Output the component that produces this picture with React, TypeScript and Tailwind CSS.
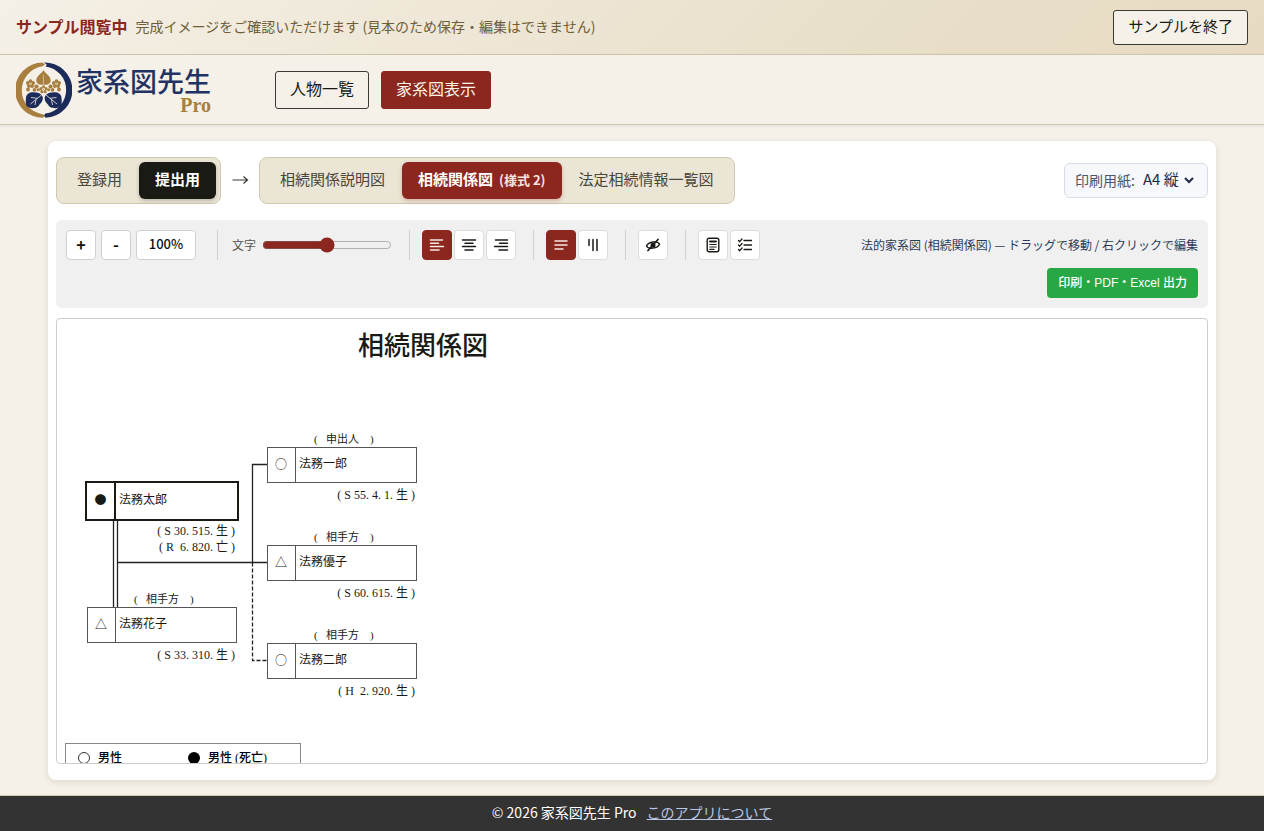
import React from "react";

const SANS = "font-['Noto_Sans_CJK_JP',sans-serif]";
const SERIF = "font-['Liberation_Serif','Noto_Sans_CJK_JP',serif]";

type Person = {
  name: string;
  mark: string;
  x: number;
  y: number;
  role?: string;
  dates: string[];
  main?: boolean;
};

const people: Person[] = [
  { name: "法務太郎", mark: "●", x: 30, y: 164, dates: ["( S 30. 515. 生 )", "( R  6. 820. 亡 )"], main: true },
  { name: "法務花子", mark: "△", x: 30, y: 288, role: "(   相手方    )", dates: ["( S 33. 310. 生 )"] },
  { name: "法務一郎", mark: "○", x: 210, y: 128, role: "(   申出人    )", dates: ["( S 55. 4. 1. 生 )"] },
  { name: "法務優子", mark: "△", x: 210, y: 226, role: "(   相手方    )", dates: ["( S 60. 615. 生 )"] },
  { name: "法務二郎", mark: "○", x: 210, y: 324, role: "(   相手方    )", dates: ["( H  2. 920. 生 )"] },
];

function PersonNode({ person }: { person: Person }) {
  return (
    <div className="absolute w-[150px]" style={{ left: person.x, top: person.y }}>
      {person.role && (
        <div className="absolute bottom-full left-[47px] h-4 text-[11px] leading-4 whitespace-pre">{person.role}</div>
      )}
      <div
        className={
          person.main
            ? "flex h-9 items-stretch bg-white outline-2 outline-[#1a1a14]"
            : "flex h-9 items-stretch bg-white outline-1 -outline-offset-1 outline-[#555]"
        }
      >
        <span
          className={
            person.main
              ? "flex w-[29px] items-center justify-center border-r-2 border-[#1a1a14] pb-0.5 font-['Noto_Sans_CJK_JP',sans-serif] text-xs"
              : "flex w-[29px] items-center justify-center border-r border-[#555] pb-0.5 font-['Noto_Sans_CJK_JP',sans-serif] text-xs"
          }
        >
          {person.mark}
        </span>
        <span className="flex items-center pb-0.5 pl-[3px] text-xs">{person.name}</span>
      </div>
      <div className="pt-1 pr-0.5 text-right">
        {person.dates.map((d) => (
          <div key={d} className="text-xs leading-4 whitespace-pre">
            {d}
          </div>
        ))}
      </div>
    </div>
  );
}

const petals = [
  [0, -2.7],
  [2.6, -0.8],
  [1.6, 2.2],
  [-1.6, 2.2],
  [-2.6, -0.8],
];

function Blossom({ x, y, r = 1.9 }: { x: number; y: number; r?: number }) {
  return (
    <g transform={`translate(${x} ${y})`}>
      {petals.map(([cx, cy]) => (
        <circle key={`${cx} ${cy}`} cx={cx} cy={cy} r={r} fill="#a87f3e" />
      ))}
      <circle r="1.100" fill="#f5f0e8" />
      <circle r=".6" fill="#a87f3e" />
    </g>
  );
}

function Emblem() {
  return (
    <svg viewBox="0 0 56 56" className="size-14 shrink-0" aria-hidden="true">
      <path d="M26.500 .6A27.500 27.500 0 0 0 27 55.800L29 53.500L26.500 52.200A24.200 24.200 0 0 1 26.500 4.300L29 2.600Z" fill="#a87f3e" />
      <path d="M28 .5L30.800 2.700L29.500 4.400A23.800 23.800 0 0 1 29.300 51.600L28 53.500L29.600 55.700A27.600 27.600 0 0 0 28 .5Z" fill="#1d2b5b" />
      <path d="M27.500 8C29 11.500 34.700 13.500 34.700 18.500C34.700 21.700 31.500 23.500 27.500 22.500C23.500 23.500 20.300 21.700 20.300 18.500C20.300 13.500 26 11.500 27.500 8Z" fill="#a87f3e" />
      <path d="M27.500 13V22" stroke="#f5f0e8" strokeWidth=".5" />
      <Blossom x={14.5} y={21.8} />
      <Blossom x={40.5} y={21.8} />
      <Blossom x={27.5} y={27.500} r={1.6} />
      <g fill="#a87f3e">
        <circle cx="12" cy="27.500" r="1.900" />
        <circle cx="43" cy="27.500" r="1.900" />
        <circle cx="20.500" cy="24.500" r="2.100" />
        <circle cx="34.500" cy="24.500" r="2.100" />
        <circle cx="18.500" cy="27.800" r="1.900" />
        <circle cx="36.500" cy="27.800" r="1.900" />
        <circle cx="22.300" cy="27.800" r="1.500" />
        <circle cx="32.700" cy="27.800" r="1.500" />
      </g>
      <path d="M10 36C10 31.500 15 29.500 19 30.500C22.500 30 26 32.500 26.700 35C27.200 39 25 41 23.500 42.500C22.500 46 16 47 13 45.500C9.500 45 9.500 40 10 36Z" fill="#1d2b5b" />
      <path d="M45.500 36C45.500 31.500 40.500 29.500 36.500 30.500C33 30 29.500 32.500 28.800 35C28.300 39 30.500 41 32 42.500C33 46 39.500 47 42.500 45.500C46 45 46 40 45.500 36Z" fill="#1d2b5b" />
      <path d="M25.500 33L14.500 42M21.500 36.300L15 35.500M20 37.500L19 43M30 33L41 42M34 36.300L40.500 35.500M35.500 37.500L36.500 43" stroke="#f5f0e8" strokeWidth=".8" fill="none" />
    </svg>
  );
}

function LineIcon({ d, width = 1.5 }: { d: string; width?: number }) {
  return (
    <svg
      viewBox="0 0 16 16"
      className="size-4"
      fill="none"
      stroke="currentColor"
      strokeWidth={width}
      strokeLinecap="round"
      strokeLinejoin="round"
      aria-hidden="true"
    >
      <path d={d} />
    </svg>
  );
}

function ToolButton({ label, active, children }: { label: string; active?: boolean; children: React.ReactNode }) {
  return (
    <button
      type="button"
      aria-label={label}
      aria-pressed={active}
      className={
        active
          ? "flex size-[30px] items-center justify-center rounded border border-[#8b271e] bg-[#8b271e] text-[#f5e8e4]"
          : "flex size-[30px] items-center justify-center rounded border border-[#dcdcdc] bg-white text-[#1a1a14]"
      }
    >
      {children}
    </button>
  );
}

function Divider() {
  return <span className="mr-3 ml-[17px] h-[30px] w-px bg-[#d0d0d0]" />;
}

const zoomButton =
  "h-[30px] rounded border border-[#d0d0d0] bg-white text-[#111] flex items-center justify-center pb-0.5";
const tab = "h-[37px] rounded-md px-4 pb-0.5 text-[15px] text-[#4a4638]";

export default function App() {
  return (
    <div className={`${SANS} flex min-h-screen flex-col bg-[#f5f0e8] text-[#1a1a14]`}>
      <div className="flex items-center justify-between border-b border-[#d0c8b0] bg-[linear-gradient(135deg,#f5f0e6,#e8dfc9_70%,#e8dac2)] px-4 pt-2.5 pb-[9px]">
        <p className="flex items-center gap-2 pb-1 text-sm text-[#6f5d38]">
          <strong className="text-base font-bold text-[#8b271e]">サンプル閲覧中</strong>
          <span>完成イメージをご確認いただけます (見本のため保存・編集はできません)</span>
        </p>
        <button
          type="button"
          className={`${SERIF} h-[35px] rounded-[3px] border border-[#3a3a34] bg-[#f5f0e8] px-3.5 text-[15px]`}
        >
          サンプルを終了
        </button>
      </div>

      <header className="flex items-center border-b border-[#cfc8b2] px-4 pt-[7px] pb-1.5 shadow-[0_1px_4px_rgba(0,0,0,0.08)]">
        <a href="#" className="flex items-center gap-1">
          <Emblem />
          <span className={`${SERIF} flex flex-col items-end pt-0.5`}>
            <span className="text-[27px] leading-7 font-medium text-[#223363]">家系図先生</span>
            <span className="text-[20px] leading-4 font-bold text-[#a87f3e]">Pro</span>
          </span>
        </a>
        <nav className={`${SERIF} ml-16 flex gap-3 text-base`}>
          <button type="button" className="h-[38px] rounded-[3px] border border-[#3a3a34] px-3.5">
            人物一覧
          </button>
          <button type="button" className="h-[38px] rounded-[3px] border border-[#8b271e] bg-[#8b271e] px-3.5 text-[#faf3ea]">
            家系図表示
          </button>
        </nav>
      </header>

      <main className="mx-12 mt-4 mb-[15px] flex flex-1 flex-col rounded-lg bg-white px-2 py-4 shadow-[0_2px_6px_rgba(60,50,20,0.12)]">
        <div className="flex items-center justify-between">
          <div className="flex items-center gap-2.5">
            <div className="flex gap-px rounded-lg border border-[#d1c8b0] bg-[#ebe5d5] p-1">
              <button type="button" className={tab}>
                登録用
              </button>
              <button
                type="button"
                className="h-[37px] rounded-md bg-[#1a1a14] px-4 pb-0.5 text-[15px] font-bold text-white shadow-[0_2px_4px_rgba(0,0,0,0.2)]"
              >
                提出用
              </button>
            </div>
            <svg viewBox="0 0 18 14" className="h-3.5 w-[18px]" fill="none" stroke="#3a3a34" strokeWidth="1.200" aria-hidden="true">
              <path d="M1.500 6H16.500M12.500 2.500L16.500 6L12.500 9.500" />
            </svg>
            <div className="flex gap-px rounded-lg border border-[#d1c8b0] bg-[#ebe5d5] p-1">
              <button type="button" className={tab}>
                相続関係説明図
              </button>
              <button
                type="button"
                className="flex h-[37px] items-center gap-1.5 rounded-md bg-[#8b271e] px-4 pb-0.5 text-[15px] font-bold text-white shadow-[0_2px_4px_rgba(139,39,30,0.25)]"
              >
                相続関係図
                <span className="text-[13px] text-[#f5e4df]">(様式 2)</span>
              </button>
              <button type="button" className={tab}>
                法定相続情報一覧図
              </button>
            </div>
          </div>
          <div className="relative flex h-[35px] items-center rounded-md border border-[#d6dce8] bg-[#f6f8fc] pr-3 pb-0.5 pl-2.5">
            <label htmlFor="paper" className="text-sm text-[#4a5568]">
              印刷用紙:
            </label>
            <select id="paper" className="ml-2 w-[52px] appearance-none bg-transparent text-[15px] text-[#1f2a44]">
              <option>A4 縦</option>
              <option>A4 横</option>
            </select>
            <svg
              viewBox="0 0 10 8"
              className="pointer-events-none absolute right-[13px] h-2 w-2.5"
              fill="none"
              stroke="#1f2a44"
              strokeWidth="2"
              aria-hidden="true"
            >
              <path d="M1 2L5 6L9 2" />
            </svg>
          </div>
        </div>

        <div className="mt-4 flex items-start justify-between rounded-md bg-[#f0f0f0] p-2.5">
          <div className="flex items-center">
            <div className="mr-1 flex gap-[5px]">
              <button type="button" aria-label="拡大" className={`${zoomButton} w-[30px] text-base font-bold`}>
                +
              </button>
              <button type="button" aria-label="縮小" className={`${zoomButton} w-[30px] text-base font-bold`}>
                -
              </button>
              <button type="button" className={`${zoomButton} w-[60px] text-[13px] font-medium`}>
                100%
              </button>
            </div>
            <Divider />
            <label htmlFor="font-size" className="mr-1.5 ml-0.5 text-xs text-[#555]">
              文字
            </label>
            <input id="font-size" type="range" min={0} max={100} defaultValue={50} className="w-[130px] accent-[#8b271e]" />
            <Divider />
            <div className="flex gap-0.5">
              <ToolButton label="左揃え" active>
                <LineIcon d="M1.500 3H13.500M1.500 6.300H9.500M1.500 9.600H14.500M1.500 13H10" />
              </ToolButton>
              <ToolButton label="中央揃え">
                <LineIcon d="M1.500 3H14.500M4 6.300H12M1.500 9.600H14.500M4 13H12" />
              </ToolButton>
              <ToolButton label="右揃え">
                <LineIcon d="M2.500 3H14.500M6.500 6.300H14.500M1.500 9.600H14.500M6 13H14.500" />
              </ToolButton>
            </div>
            <Divider />
            <div className="flex gap-0.5">
              <ToolButton label="横書き" active>
                <LineIcon d="M2 4H14M2 8H14M2 12H10" />
              </ToolButton>
              <ToolButton label="縦書き">
                <LineIcon d="M4 2.500V8.500M8 2.500V13.500M12 2.500V13.500" />
              </ToolButton>
            </div>
            <Divider />
            <ToolButton label="非表示">
              <svg viewBox="0 0 16 16" className="size-4" fill="none" stroke="currentColor" strokeLinecap="round" aria-hidden="true">
                <path d="M1.500 9C3.500 4.500 12.500 3.500 14.500 7.200C12.500 11.800 3.500 12.500 1.500 9Z" strokeWidth="1.400" />
                <circle cx="8" cy="8.200" r="2.500" fill="currentColor" stroke="none" />
                <path d="M3 13.500L13 2.500" strokeWidth="1.800" />
              </svg>
            </ToolButton>
            <Divider />
            <div className="flex gap-0.5">
              <ToolButton label="書式">
                <svg viewBox="0 0 16 16" className="size-4" fill="none" stroke="currentColor" strokeLinecap="round" aria-hidden="true">
                  <rect x="2.200" y="1.200" width="11.600" height="13.600" rx="2" strokeWidth="1.400" />
                  <path d="M5 4.600H11" strokeWidth="2" />
                  <path d="M4.800 7.500H11.200M4.800 10H11.200M4.800 12.400H9" strokeWidth="1.100" />
                </svg>
              </ToolButton>
              <ToolButton label="項目">
                <LineIcon
                  width={1.3}
                  d="M1.500 3.500L2.700 4.700L5 2M1.500 8L2.700 9.200L5 6.500M1.500 12.500L2.700 13.700L5 11M7 3.500H14.500M7 8H14.500M7 12.500H14.500"
                />
              </ToolButton>
            </div>
          </div>
          <div className="flex flex-col items-end gap-2">
            <p className="text-xs leading-[30px] text-[#2d3958]">法的家系図 (相続関係図) — ドラッグで移動 / 右クリックで編集</p>
            <button
              type="button"
              className="h-[30px] rounded bg-[#28a745] px-[11px] font-['Liberation_Sans','Noto_Sans_CJK_JP',sans-serif] text-xs font-medium text-white"
            >
              印刷・PDF・Excel 出力
            </button>
          </div>
        </div>

        <section className={`${SERIF} relative mt-2.5 min-h-[400px] flex-1 overflow-hidden rounded border border-[#ccc] bg-white`}>
          <h1 className="w-[732px] pt-2.5 text-center text-[26px] leading-9 font-medium">相続関係図</h1>
          <svg className="absolute top-0 left-0 h-[446px] w-[400px]" fill="none" stroke="#222" aria-hidden="true">
            <path d="M56.500 200V288M60.500 200V288" strokeWidth="1.300" />
            <path d="M60.500 243.500H210M195.500 243.500V145.500H210" strokeWidth="1.300" />
            <path d="M195.500 243.500V341.500H210" strokeWidth="1.300" strokeDasharray="4 2" />
          </svg>
          {people.map((p) => (
            <PersonNode key={p.name} person={p} />
          ))}
          <div className="absolute top-[424px] left-2 flex h-[100px] w-[236px] items-start border border-[#888] pt-1 pl-3 text-xs leading-5 font-medium text-black">
            <span className="flex w-[110px] items-center gap-2">
              <span className="size-3 rounded-full border border-[#333]" />
              男性
            </span>
            <span className="flex items-center gap-2">
              <span className="size-3 rounded-full bg-black" />
              男性 (死亡)
            </span>
          </div>
        </section>
      </main>

      <footer className="flex items-center justify-center gap-2.5 border-t border-[#d0c8b0] bg-[#333] pt-1 pb-[7px] text-sm leading-6 text-white">
        <span>© 2026 家系図先生 Pro</span>
        <a href="#" className="text-[#b8c6e6] underline">
          このアプリについて
        </a>
      </footer>
    </div>
  );
}
